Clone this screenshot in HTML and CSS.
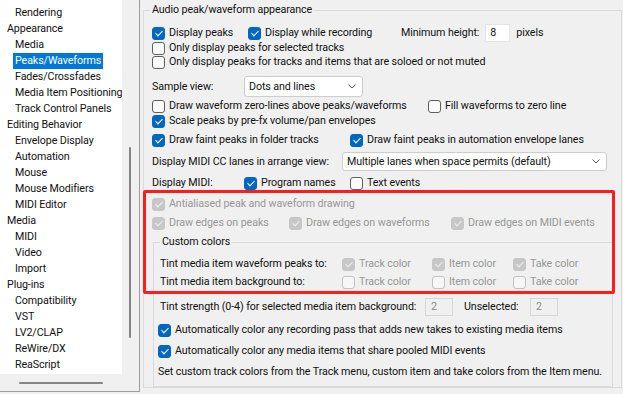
FILE: index.html
```html
<!DOCTYPE html>
<html>
<head>
<meta charset="utf-8">
<link rel="stylesheet" href="styles.css">
</head>
<body>
<div class="window">
  <div class="tree">
    <div class="tree-list">
      <div class="ti child"><span>Rendering</span></div>
      <div class="ti"><span>Appearance</span></div>
      <div class="ti child"><span>Media</span></div>
      <div class="ti child sel"><span>Peaks/Waveforms</span></div>
      <div class="ti child"><span>Fades/Crossfades</span></div>
      <div class="ti child"><span>Media Item Positioning</span></div>
      <div class="ti child"><span>Track Control Panels</span></div>
      <div class="ti"><span>Editing Behavior</span></div>
      <div class="ti child"><span>Envelope Display</span></div>
      <div class="ti child"><span>Automation</span></div>
      <div class="ti child"><span>Mouse</span></div>
      <div class="ti child"><span>Mouse Modifiers</span></div>
      <div class="ti child"><span>MIDI Editor</span></div>
      <div class="ti"><span>Media</span></div>
      <div class="ti child"><span>MIDI</span></div>
      <div class="ti child"><span>Video</span></div>
      <div class="ti child"><span>Import</span></div>
      <div class="ti"><span>Plug-ins</span></div>
      <div class="ti child"><span>Compatibility</span></div>
      <div class="ti child"><span>VST</span></div>
      <div class="ti child"><span>LV2/CLAP</span></div>
      <div class="ti child"><span>ReWire/DX</span></div>
      <div class="ti child"><span>ReaScript</span></div>
    </div>
    <div class="vscroll"><div class="vthumb"></div></div>
    <div class="hscroll"><div class="hthumb"></div></div>
    <div class="corner"></div>
  </div>

  <div class="pane">
    <fieldset class="grp outer">
      <legend>Audio peak/waveform appearance</legend>

      <div class="row row-first">
        <label class="opt w-dp"><span class="cb on"></span>Display peaks</label>
        <label class="opt w-dwr"><span class="cb on"></span>Display while recording</label>
        <span class="lbl">Minimum height:</span>
        <span class="num">8</span>
        <span class="lbl after-num">pixels</span>
      </div>
      <div class="row">
        <label class="opt"><span class="cb"></span>Only display peaks for selected tracks</label>
      </div>
      <div class="row">
        <label class="opt"><span class="cb"></span>Only display peaks for tracks and items that are soloed or not muted</label>
      </div>
      <div class="row row-sample">
        <span class="lbl w-sv">Sample view:</span>
        <div class="select sel-sample"><span>Dots and lines</span><svg width="8" height="5" viewBox="0 0 8 5"><path d="M0.5 0.5 L4 4 L7.5 0.5" fill="none" stroke="#5a5a5a" stroke-width="1"/></svg></div>
      </div>
      <div class="row row-zero">
        <label class="opt w-zero"><span class="cb"></span>Draw waveform zero-lines above peaks/waveforms</label>
        <label class="opt"><span class="cb"></span>Fill waveforms to zero line</label>
      </div>
      <div class="row row-scale">
        <label class="opt"><span class="cb on"></span>Scale peaks by pre-fx volume/pan envelopes</label>
      </div>
      <div class="row row-faint">
        <label class="opt w-faint"><span class="cb on"></span>Draw faint peaks in folder tracks</label>
        <label class="opt"><span class="cb on"></span>Draw faint peaks in automation envelope lanes</label>
      </div>
      <div class="row row-cc">
        <span class="lbl w-cc">Display MIDI CC lanes in arrange view:</span>
        <div class="select sel-cc"><span>Multiple lanes when space permits (default)</span><svg width="8" height="5" viewBox="0 0 8 5"><path d="M0.5 0.5 L4 4 L7.5 0.5" fill="none" stroke="#5a5a5a" stroke-width="1"/></svg></div>
      </div>
      <div class="row row-midi">
        <span class="lbl w-sv">Display MIDI:</span>
        <label class="opt w-prog"><span class="cb on"></span>Program names</label>
        <label class="opt"><span class="cb"></span>Text events</label>
      </div>
      <div class="row row-anti dis">
        <label class="opt"><span class="cb on"></span>Antialiased peak and waveform drawing</label>
      </div>
      <div class="row row-edges dis">
        <label class="opt w-e1"><span class="cb on"></span>Draw edges on peaks</label>
        <label class="opt w-e2"><span class="cb on"></span>Draw edges on waveforms</label>
        <label class="opt"><span class="cb on"></span>Draw edges on MIDI events</label>
      </div>

      <fieldset class="grp inner">
        <legend>Custom colors</legend>
        <div class="row row-tint1">
          <span class="lbl w-tint">Tint media item waveform peaks to:</span>
          <label class="opt w-track dis"><span class="cb on"></span>Track color</label>
          <label class="opt w-item dis"><span class="cb on"></span>Item color</label>
          <label class="opt dis"><span class="cb on"></span>Take color</label>
        </div>
        <div class="row row-tint2">
          <span class="lbl w-tint">Tint media item background to:</span>
          <label class="opt w-track dis"><span class="cb"></span>Track color</label>
          <label class="opt w-item dis"><span class="cb"></span>Item color</label>
          <label class="opt dis"><span class="cb"></span>Take color</label>
        </div>
        <div class="row row-strength">
          <span class="lbl w-str">Tint strength (0-4) for selected media item background:</span>
          <span class="num off">2</span>
          <span class="lbl w-unsel">Unselected:</span>
          <span class="num off">2</span>
        </div>
        <div class="row row-auto1 shift">
          <label class="opt"><span class="cb on"></span>Automatically color any recording pass that adds new takes to existing media items</label>
        </div>
        <div class="row row-auto2 shift">
          <label class="opt"><span class="cb on"></span>Automatically color any media items that share pooled MIDI events</label>
        </div>
        <div class="row row-set shift">
          <span class="lbl">Set custom track colors from the Track menu, custom item and take colors from the Item menu.</span>
        </div>
      </fieldset>
    </fieldset>
  </div>

  <div class="callout"></div>
</div>
</body>
</html>
```
FILE: styles.css
```css
html, body {
  margin: 0;
  padding: 0;
  background: #f0f0f0;
}
body {
  font-family: Roboto, "Liberation Sans", sans-serif;
  font-size: 10.7px;
  letter-spacing: -0.1px;
  line-height: 14px;
  color: #111;
}
.window {
  position: relative;
  display: flex;
  width: 623px;
  height: 394px;
  overflow: hidden;
}

/* ---- tree ---- */
.tree {
  flex: none;
  width: 140px;
  height: 392px;
  box-sizing: border-box;
  border-right: 1px solid #9c9c9c;
  border-bottom: 1px solid #9c9c9c;
  display: grid;
  grid-template-columns: 122px 17px;
  grid-template-rows: 374px 17px;
}
.tree-list {
  background: #fff;
  padding-top: 5px;
  overflow: hidden;
}
.ti {
  height: 16px;
  line-height: 16px;
  padding-left: 5px;
  white-space: nowrap;
}
.ti span {
  padding: 0 2px;
  display: inline-block;
}
.ti.child { padding-left: 13px; }
.ti.sel span {
  background: #0078d7;
  color: #fff;
}
.vscroll {
  background: #f0f0f0;
  padding-top: 147px;
  padding-left: 7px;
}
.vthumb {
  width: 2px;
  height: 191px;
  background: #858585;
  border-radius: 1px;
}
.hscroll {
  background: #f0f0f0;
  padding-top: 8px;
  padding-left: 19px;
}
.hthumb {
  width: 84px;
  height: 2px;
  background: #858585;
  border-radius: 1px;
}
.corner { background: #f0f0f0; }

/* ---- right pane ---- */
.pane {
  flex: none;
  padding: 3px 0 0 3px;
}
.grp {
  margin: 0;
  border: 1px solid #dadada;
  min-width: 0;
  box-sizing: border-box;
}
.grp legend {
  padding: 0 2px;
  height: 14px;
  line-height: 14px;
}
.outer {
  width: 479px;
  padding: 0 6px 0 6px;
}
.inner {
  width: 460px;
  margin: 5px 0 0 3px;
  padding: 0 6px 7px 6px;
}

.row {
  display: flex;
  align-items: center;
  height: 14px;
  white-space: nowrap;
}
.outer > .row { padding-left: 2px; }
.row.shift { margin-left: -2px; }

.row-first { margin-top: 8px; height: 16px; }
.row-sample { margin-top: 7px; height: 21px; }
.row-zero { margin-top: 2px; }
.row-scale { margin-top: 1px; }
.row-faint { margin-top: 5px; }
.row-cc { margin-top: 5px; height: 19px; }
.row-midi { margin-top: 5px; }
.row-anti { margin-top: 7px; }
.row-edges { margin-top: 5px; }
.row-tint1 { margin-top: 8px; }
.row-tint2 { margin-top: 4px; }
.row-strength { margin-top: 9px; height: 18px; }
.row-auto1 { margin-top: 7px; }
.row-auto2 { margin-top: 7px; }
.row-set { margin-top: 7px; }

.opt {
  display: flex;
  align-items: center;
  flex: none;
}
.lbl { flex: none; }

.w-dp { width: 96px; }
.w-dwr { width: 153px; }
.w-sv { width: 92px; }
.w-zero { width: 276px; }
.w-faint { width: 198px; }
.w-cc { width: 190px; }
.w-prog { width: 106px; }
.w-e1 { width: 137px; }
.w-e2 { width: 162px; }
.w-tint { width: 182px; }
.w-track { width: 90px; }
.w-item { width: 81px; }
.w-str { width: 265px; }
.w-unsel { width: 66px; margin-left: 11px; }

.dis, .dis .opt { color: #979797; }

/* checkboxes */
.cb {
  position: relative;
  flex: none;
  width: 13px;
  height: 13px;
  box-sizing: border-box;
  border: 1px solid #5f5f5f;
  border-radius: 3px;
  background: #fbfbfb;
  margin-right: 4px;
}
.cb.on {
  background: #0067c0;
  border-color: #0067c0;
}
.cb.on::after {
  content: "";
  position: absolute;
  left: 3.5px;
  top: 1px;
  width: 3px;
  height: 6px;
  border: solid #fff;
  border-width: 0 1.3px 1.3px 0;
  transform: rotate(45deg);
}
.dis .cb {
  border-color: #c2c2c2;
  background: #f7f7f7;
}
.dis .cb.on {
  background: #c7c7c7;
  border-color: #c7c7c7;
}
.dis .cb.on::after { border-color: #efefef; }

/* inputs */
.num {
  flex: none;
  width: 25px;
  height: 18px;
  box-sizing: border-box;
  background: #fff;
  border: 1px solid #e4e4e4;
  padding-left: 4px;
  line-height: 16px;
  margin-left: 6px;
}
.num.off {
  width: 28px;
  margin-left: 0;
  background: #f0f0f0;
  border-color: #d6d6d6;
  color: #8a8a8a;
  padding-left: 5px;
}
.after-num { margin-left: 6px; }

.select {
  flex: none;
  display: flex;
  align-items: center;
  justify-content: space-between;
  box-sizing: border-box;
  height: 100%;
  background: #fff;
  border: 1px solid #cdcdcd;
  border-radius: 3px;
  padding: 0 6px 0 4px;
}
.sel-sample { width: 119px; }
.sel-cc { width: 265px; }

/* annotation overlay */
.callout {
  position: absolute;
  left: 143px;
  top: 190px;
  width: 472px;
  height: 104px;
  box-sizing: border-box;
  border: 3px solid #ff1c1c;
  border-radius: 2px;
  pointer-events: none;
}
```
